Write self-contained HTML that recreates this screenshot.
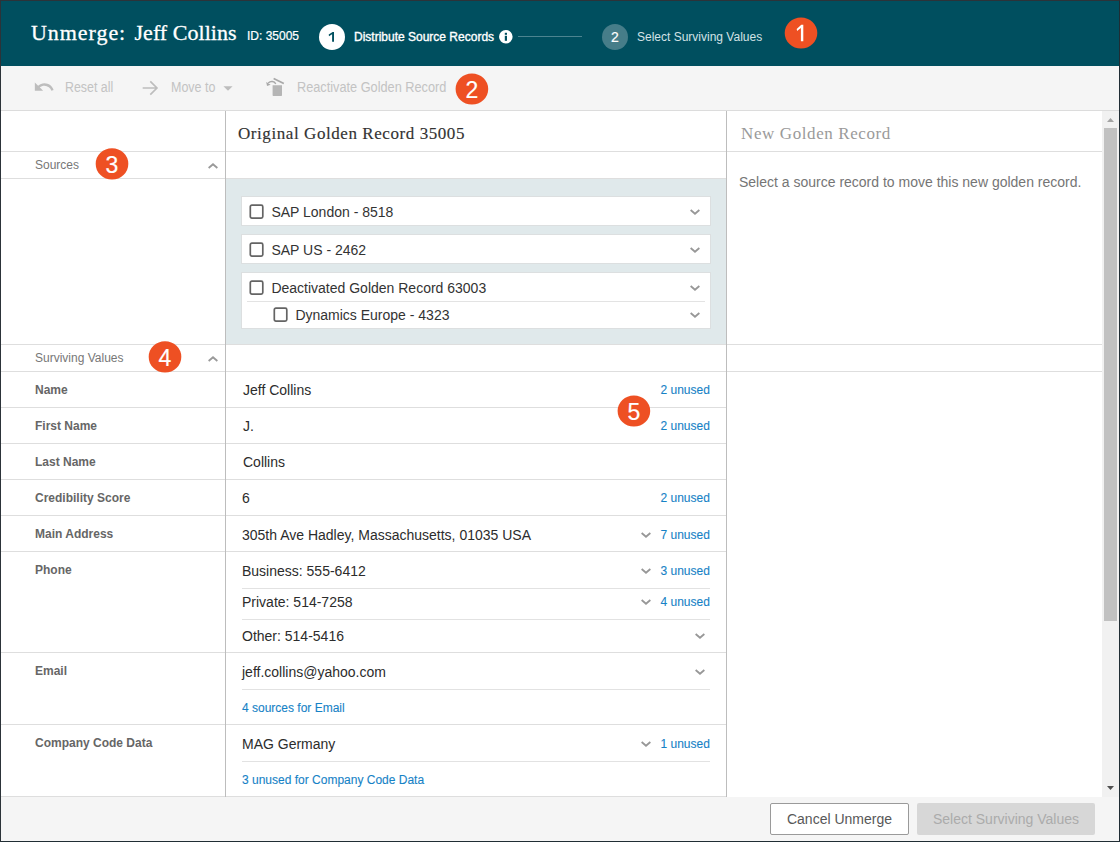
<!DOCTYPE html>
<html><head><meta charset="utf-8">
<style>
*{box-sizing:border-box;margin:0;padding:0}
html,body{width:1120px;height:842px;overflow:hidden;background:#fff;font-family:"Liberation Sans",sans-serif;}
#root{position:absolute;left:0;top:0;width:1120px;height:842px;background:#fff;overflow:hidden}
.abs{position:absolute}
.t{position:absolute;white-space:nowrap;line-height:1}
.hl{position:absolute;height:1px;background:#dedede}
.vl{position:absolute;width:1px;background:#bdbdbd}
.serif{font-family:"Liberation Serif",serif}
.badge{position:absolute;width:32px;height:32px;border-radius:50%;background:#ee5023;color:#fff;font-size:22px;text-align:center;line-height:32px}
.lbl{position:absolute;left:35px;font-size:12px;font-weight:bold;color:#666;white-space:nowrap;line-height:1}
.val{position:absolute;left:242px;font-size:14px;color:#2c2c2c;white-space:nowrap;line-height:1}
.lnk{position:absolute;font-size:12px;color:#1682c6;-webkit-text-stroke:.1px #1682c6;white-space:nowrap;line-height:1}
.card{position:absolute;left:241px;width:470px;background:#fff;border:1px solid #dcdfe0}
.cb{position:absolute;width:15px;height:15px;border:2px solid #6a6a6a;border-radius:2px;background:#fff}
.ct{position:absolute;font-size:14px;color:#333;white-space:nowrap;line-height:1}
svg{position:absolute;overflow:visible}
</style></head><body>
<div id="root">

<div class="abs" style="left:0;top:0;width:1120px;height:66px;background:#004f5f"></div>
<div class="t serif" style="left:31px;top:22px;font-size:22px;color:#fff;letter-spacing:.95px;-webkit-text-stroke:.3px #fff">Unmerge:</div>
<div class="t serif" style="left:134.5px;top:22px;font-size:22px;color:#fff;letter-spacing:.04px;-webkit-text-stroke:.3px #fff">Jeff Collins</div>
<div class="t" style="left:247px;top:30px;font-size:12px;color:#fff;-webkit-text-stroke:.2px #fff">ID: 35005</div>
<div class="abs" style="left:319px;top:24px;width:26px;height:26px;border-radius:50%;background:#fff"></div>
<svg style="left:0;top:0" width="400" height="60"><path fill="#004f5f" d="M334 31.9V41.8H332.1V34.3L329 36.2L328.7 34.5L332.6 31.9Z"/></svg>
<div class="t" style="left:354px;top:31px;font-size:12px;color:#fff;-webkit-text-stroke:.35px #fff">Distribute Source Records</div>
<svg style="left:499px;top:30px" width="14" height="14" viewBox="0 0 14 14"><circle cx="6.8" cy="6.8" r="6.8" fill="#fff"/><rect x="5.8" y="5.8" width="2.2" height="5" fill="#004f5f"/><rect x="5.8" y="2.8" width="2.2" height="2" fill="#004f5f"/></svg>
<div class="abs" style="left:518px;top:36px;width:64px;height:1px;background:#4c8490"></div>
<div class="abs" style="left:602px;top:24px;width:26px;height:26px;border-radius:50%;background:#467d89;color:#fff;font-size:14px;text-align:center;line-height:26px;-webkit-text-stroke:.2px #fff">2</div>
<div class="t" style="left:637px;top:31px;font-size:12px;color:#d3e2e6">Select Surviving Values</div>

<div class="abs" style="left:0;top:66px;width:1120px;height:44px;background:#f5f5f5"></div>
<svg style="left:33px;top:76px" width="22" height="22" viewBox="0 0 24 24"><path fill="#bdbdbd" d="M12.5 8c-2.65 0-5.05.99-6.9 2.6L2 7v9h9l-3.62-3.62c1.39-1.16 3.16-1.88 5.12-1.88 3.54 0 6.55 2.31 7.6 5.5l2.37-.78C21.08 11.03 17.15 8 12.5 8z"/></svg>
<div class="t" style="left:65px;top:80.5px;font-size:13.8px;color:#c3c3c3;transform:scaleX(.897);transform-origin:0 0">Reset all</div>
<svg style="left:139px;top:77px" width="22" height="22" viewBox="0 0 24 24"><path fill="none" stroke="#bdbdbd" stroke-width="1.8" d="M4 12h15M12.3 4.7l7.3 7.3-7.3 7.3"/></svg>
<div class="t" style="left:171px;top:80.5px;font-size:13.8px;color:#c3c3c3;transform:scaleX(.904);transform-origin:0 0">Move to</div>
<svg style="left:217px;top:77px" width="22" height="22" viewBox="0 0 24 24"><path fill="#bdbdbd" d="M7 10l5 5 5-5z"/></svg>
<svg style="left:264px;top:76px" width="22" height="22" viewBox="0 0 22 22"><path fill="#b5b5b5" d="M8.6 9.3h9.4v9.6a1.2 1.2 0 0 1-1.2 1.2h-7a1.2 1.2 0 0 1-1.2-1.2z"/><path stroke="#a8a8a8" stroke-width="1.7" fill="none" d="M9.6 2.6l10.2 5"/><path stroke="#a8a8a8" stroke-width="1.4" fill="none" d="M11.8 7.8c-1.6-2.6-5-3.3-7.6-.8"/><path fill="#a8a8a8" d="M2.2 6l.8 3.9 3.6-1.2z"/></svg>
<div class="t" style="left:296.5px;top:80.5px;font-size:13.8px;color:#c3c3c3;transform:scaleX(.923);transform-origin:0 0">Reactivate Golden Record</div>
<div class="hl" style="left:0;top:110px;width:1120px;background:#dcdcdc"></div>

<div class="t serif" style="left:238px;top:125px;-webkit-text-stroke:.15px #333;font-size:17px;color:#333;letter-spacing:.57px">Original Golden Record 35005</div>
<div class="t serif" style="left:741px;top:125px;font-size:17px;color:#9a9a9a;letter-spacing:.6px">New Golden Record</div>
<div class="t" style="left:739px;top:175px;font-size:14px;color:#757575">Select a source record to move this new golden record.</div>
<div class="t" style="left:35px;top:159px;font-size:12px;color:#777">Sources</div>
<div class="t" style="left:35px;top:352px;font-size:12px;color:#777">Surviving Values</div>

<svg style="left:207px;top:162px" width="12" height="8" viewBox="0 0 12 8"><path d="M1.65 6.05L6 2.3l4.35 3.75" fill="none" stroke="#999" stroke-width="1.8"/></svg>
<svg style="left:207px;top:355px" width="12" height="8" viewBox="0 0 12 8"><path d="M1.65 6.05L6 2.3l4.35 3.75" fill="none" stroke="#999" stroke-width="1.8"/></svg>
<div class="abs" style="left:226px;top:179px;width:500px;height:165px;background:#e0e9eb"></div>
<div class="card" style="top:196px;height:30px"></div>
<div class="card" style="top:234px;height:30px"></div>
<div class="card" style="top:272px;height:57px"></div>
<div class="hl" style="left:247px;top:301px;width:458px;background:#e3e3e3"></div>
<svg style="left:249px;top:204px" width="16" height="16"><rect x="1.3" y="1.2" width="12.5" height="13" rx="1.6" fill="#fff" stroke="#646464" stroke-width="1.7"/></svg>
<div class="ct" style="left:271.4px;top:205px">SAP London - 8518</div>
<svg style="left:249px;top:242px" width="16" height="16"><rect x="1.3" y="1.2" width="12.5" height="13" rx="1.6" fill="#fff" stroke="#646464" stroke-width="1.7"/></svg>
<div class="ct" style="left:271.4px;top:243px">SAP US - 2462</div>
<svg style="left:249px;top:280px" width="16" height="16"><rect x="1.3" y="1.2" width="12.5" height="13" rx="1.6" fill="#fff" stroke="#646464" stroke-width="1.7"/></svg>
<div class="ct" style="left:271.4px;top:281px">Deactivated Golden Record 63003</div>
<svg style="left:273px;top:307px" width="16" height="16"><rect x="1.3" y="1.2" width="12.5" height="13" rx="1.6" fill="#fff" stroke="#646464" stroke-width="1.7"/></svg>
<div class="ct" style="left:295.4px;top:308px">Dynamics Europe - 4323</div>
<svg style="left:689px;top:208px" width="12" height="8" viewBox="0 0 12 8"><path d="M1.65 1.95L6 5.7l4.35-3.75" fill="none" stroke="#979797" stroke-width="1.8"/></svg>
<svg style="left:689px;top:246px" width="12" height="8" viewBox="0 0 12 8"><path d="M1.65 1.95L6 5.7l4.35-3.75" fill="none" stroke="#979797" stroke-width="1.8"/></svg>
<svg style="left:689px;top:284px" width="12" height="8" viewBox="0 0 12 8"><path d="M1.65 1.95L6 5.7l4.35-3.75" fill="none" stroke="#979797" stroke-width="1.8"/></svg>
<svg style="left:689px;top:311px" width="12" height="8" viewBox="0 0 12 8"><path d="M1.65 1.95L6 5.7l4.35-3.75" fill="none" stroke="#979797" stroke-width="1.8"/></svg>
<div class="hl" style="left:1px;top:151px;width:1101px"></div>
<div class="hl" style="left:1px;top:344px;width:1101px"></div>
<div class="hl" style="left:1px;top:371px;width:1101px"></div>
<div class="hl" style="left:1px;top:178px;width:725px"></div>
<div class="hl" style="left:1px;top:407px;width:725px"></div>
<div class="hl" style="left:1px;top:443px;width:725px"></div>
<div class="hl" style="left:1px;top:479px;width:725px"></div>
<div class="hl" style="left:1px;top:515px;width:725px"></div>
<div class="hl" style="left:1px;top:551px;width:725px"></div>
<div class="hl" style="left:1px;top:652px;width:725px"></div>
<div class="hl" style="left:1px;top:724px;width:725px"></div>
<div class="hl" style="left:1px;top:796px;width:725px"></div>
<div class="hl" style="left:242px;top:588px;width:468px;background:#e2e2e2"></div>
<div class="hl" style="left:242px;top:619px;width:468px;background:#e2e2e2"></div>
<div class="hl" style="left:242px;top:689px;width:468px;background:#e2e2e2"></div>
<div class="hl" style="left:242px;top:761px;width:468px;background:#e2e2e2"></div>
<div class="vl" style="left:225px;top:111px;height:686px"></div>
<div class="vl" style="left:726px;top:111px;height:686px"></div>
<div class="lbl" style="top:384px">Name</div>
<div class="lbl" style="top:420px">First Name</div>
<div class="lbl" style="top:456px">Last Name</div>
<div class="lbl" style="top:492px">Credibility Score</div>
<div class="lbl" style="top:528px">Main Address</div>
<div class="lbl" style="top:564px">Phone</div>
<div class="lbl" style="top:665px">Email</div>
<div class="lbl" style="top:737px">Company Code Data</div>
<div class="val" style="left:243px;top:383px">Jeff Collins</div>
<div class="val" style="left:243px;top:419px">J.</div>
<div class="val" style="left:243px;top:455px">Collins</div>
<div class="val" style="top:491px">6</div>
<div class="val" style="top:528px">305th Ave Hadley, Massachusetts, 01035 USA</div>
<div class="val" style="top:564px">Business: 555-6412</div>
<div class="val" style="top:595px">Private: 514-7258</div>
<div class="val" style="top:629px">Other: 514-5416</div>
<div class="val" style="top:665px">jeff.collins@yahoo.com</div>
<div class="val" style="top:737px">MAG Germany</div>
<div class="lnk" style="left:660.5px;top:384px">2 unused</div>
<div class="lnk" style="left:660.5px;top:420px">2 unused</div>
<div class="lnk" style="left:660.5px;top:492px">2 unused</div>
<div class="lnk" style="left:660.5px;top:529px">7 unused</div>
<div class="lnk" style="left:660.5px;top:565px">3 unused</div>
<div class="lnk" style="left:660.5px;top:596px">4 unused</div>
<div class="lnk" style="left:660.5px;top:738px">1 unused</div>
<div class="lnk" style="left:242px;top:702px">4 sources for Email</div>
<div class="lnk" style="left:242px;top:774px">3 unused for Company Code Data</div>
<svg style="left:640px;top:531px" width="12" height="8" viewBox="0 0 12 8"><path d="M1.65 1.95L6 5.7l4.35-3.75" fill="none" stroke="#979797" stroke-width="1.8"/></svg>
<svg style="left:640px;top:567px" width="12" height="8" viewBox="0 0 12 8"><path d="M1.65 1.95L6 5.7l4.35-3.75" fill="none" stroke="#979797" stroke-width="1.8"/></svg>
<svg style="left:640px;top:598px" width="12" height="8" viewBox="0 0 12 8"><path d="M1.65 1.95L6 5.7l4.35-3.75" fill="none" stroke="#979797" stroke-width="1.8"/></svg>
<svg style="left:694px;top:632px" width="12" height="8" viewBox="0 0 12 8"><path d="M1.65 1.95L6 5.7l4.35-3.75" fill="none" stroke="#979797" stroke-width="1.8"/></svg>
<svg style="left:694px;top:668px" width="12" height="8" viewBox="0 0 12 8"><path d="M1.65 1.95L6 5.7l4.35-3.75" fill="none" stroke="#979797" stroke-width="1.8"/></svg>
<svg style="left:640px;top:740px" width="12" height="8" viewBox="0 0 12 8"><path d="M1.65 1.95L6 5.7l4.35-3.75" fill="none" stroke="#979797" stroke-width="1.8"/></svg>

<div class="abs" style="left:0;top:797px;width:1120px;height:45px;background:#f5f5f5"></div>
<div class="abs" style="left:770px;top:803px;width:139px;height:32px;border:1px solid #9a9a9a;border-radius:2px;background:#fff;color:#585858;font-size:14px;text-align:center;line-height:30px">Cancel Unmerge</div>
<div class="abs" style="left:917px;top:803px;width:178px;height:32px;border-radius:2px;background:#d7d7d7;color:#ababab;font-size:14px;text-align:center;line-height:32px">Select Surviving Values</div>

<div class="abs" style="left:1102px;top:111px;width:17px;height:686px;background:#f1f1f1"></div>
<div class="abs" style="left:1104px;top:128px;width:13px;height:493px;background:#c1c1c1"></div>
<svg style="left:1107px;top:118px" width="7" height="4" viewBox="0 0 7 4"><path d="M0 4L3.5 0L7 4z" fill="#a3a3a3"/></svg>
<svg style="left:1107px;top:786px" width="7" height="4" viewBox="0 0 7 4"><path d="M0 0L3.5 4L7 0z" fill="#505050"/></svg>

<svg style="left:0;top:0" width="1120" height="842"><ellipse cx="801" cy="33" rx="16.3" ry="15.6" fill="#ee5023"/><path fill="#fff" d="M803.3000000000001 24.7V41.2H800.9000000000001V28.099999999999998L797.1 31.0L796.7 28.9L801.3000000000001 24.7Z"/></svg>
<svg style="left:0;top:0" width="1120" height="842"><ellipse cx="471.9" cy="89" rx="16.3" ry="15.6" fill="#ee5023"/></svg><div class="t" style="left:461.9px;top:79px;width:20px;text-align:center;font-size:23px;color:#fff;-webkit-text-stroke:.2px #fff">2</div>
<svg style="left:0;top:0" width="1120" height="842"><ellipse cx="112" cy="163.9" rx="16.3" ry="15.6" fill="#ee5023"/></svg><div class="t" style="left:102px;top:153.9px;width:20px;text-align:center;font-size:23px;color:#fff;-webkit-text-stroke:.2px #fff">3</div>
<svg style="left:0;top:0" width="1120" height="842"><ellipse cx="165" cy="356.9" rx="16.3" ry="15.6" fill="#ee5023"/></svg><div class="t" style="left:155px;top:346.9px;width:20px;text-align:center;font-size:23px;color:#fff;-webkit-text-stroke:.2px #fff">4</div>
<svg style="left:0;top:0" width="1120" height="842"><ellipse cx="633.9" cy="411" rx="16.3" ry="15.6" fill="#ee5023"/></svg><div class="t" style="left:623.9px;top:401px;width:20px;text-align:center;font-size:23px;color:#fff;-webkit-text-stroke:.2px #fff">5</div>
<div class="abs" style="left:0;top:0;width:1120px;height:842px;border:1px solid;border-color:#2c3339 #202d34 #202d34 #2c3339;pointer-events:none"></div>
</div></body></html>
